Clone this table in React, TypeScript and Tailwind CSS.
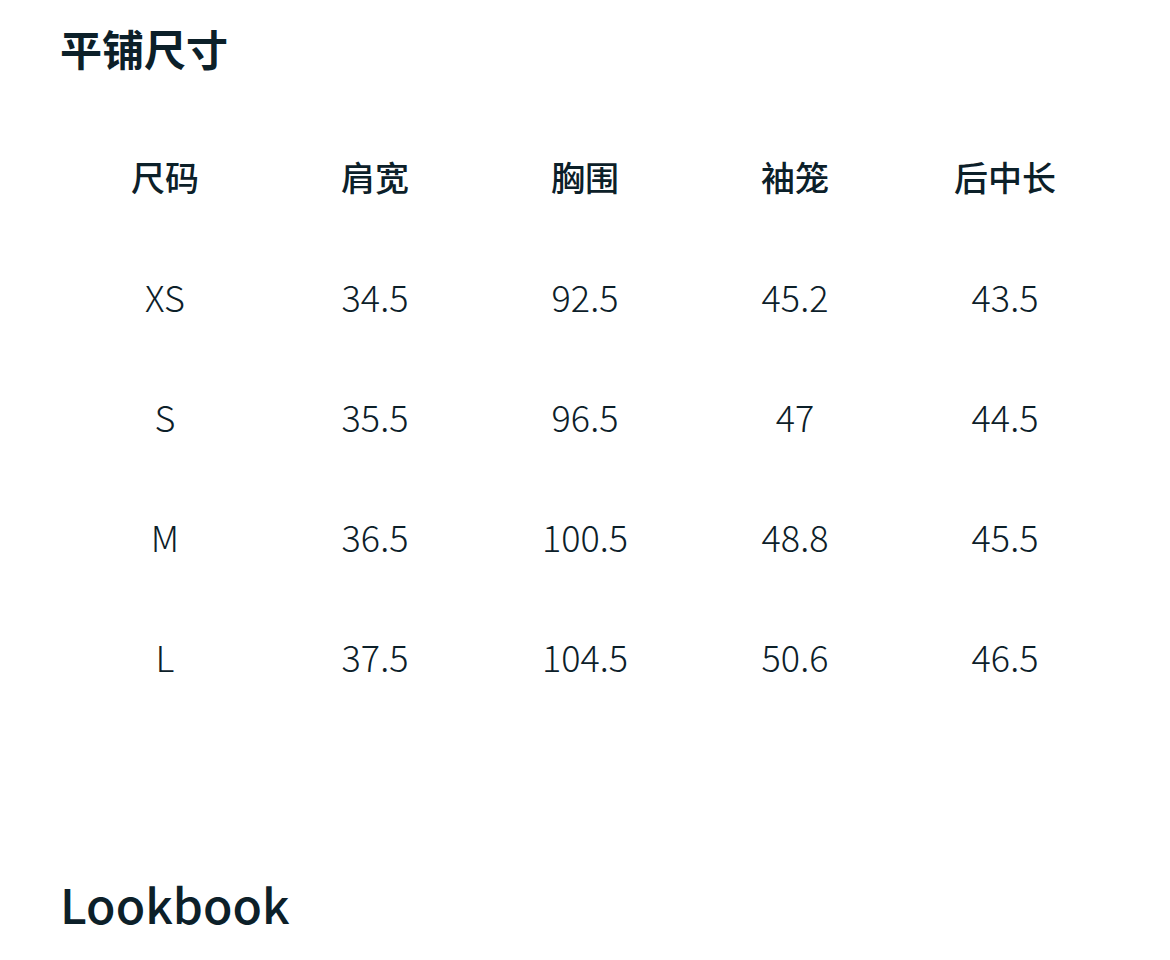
const headers = ["尺码", "肩宽", "胸围", "袖笼", "后中长"];

const rows = [
  ["XS", "34.5", "92.5", "45.2", "43.5"],
  ["S", "35.5", "96.5", "47", "44.5"],
  ["M", "36.5", "100.5", "48.8", "45.5"],
  ["L", "37.5", "104.5", "50.6", "46.5"],
];

export default function App() {
  return (
    <div
      className="min-h-[960px] bg-white pl-[60px] pt-[18px] text-[#0c2029]"
      style={{ fontFamily: '"Noto Sans CJK SC", "Noto Sans", sans-serif' }}
    >
      {/* Title */}
      <h2 className="text-[42px] font-bold leading-[60px]">平铺尺寸</h2>

      {/* Size table */}
      <div className="mt-[38px] w-[1050px]">
        <div className="grid h-[120px] grid-cols-5 items-center">
          {headers.map((h) => (
            <div key={h} className="text-center text-[34px] font-medium">
              {h}
            </div>
          ))}
        </div>
        {rows.map((row) => (
          <div key={row[0]} className="grid h-[120px] grid-cols-5 items-center">
            {row.map((cell, i) => (
              <div key={i} className="text-center text-[36px] font-light">
                {cell}
              </div>
            ))}
          </div>
        ))}
      </div>

      {/* Lookbook */}
      <h2 className="mt-[157px] text-[48px] font-medium leading-[60px]">Lookbook</h2>
    </div>
  );
}
